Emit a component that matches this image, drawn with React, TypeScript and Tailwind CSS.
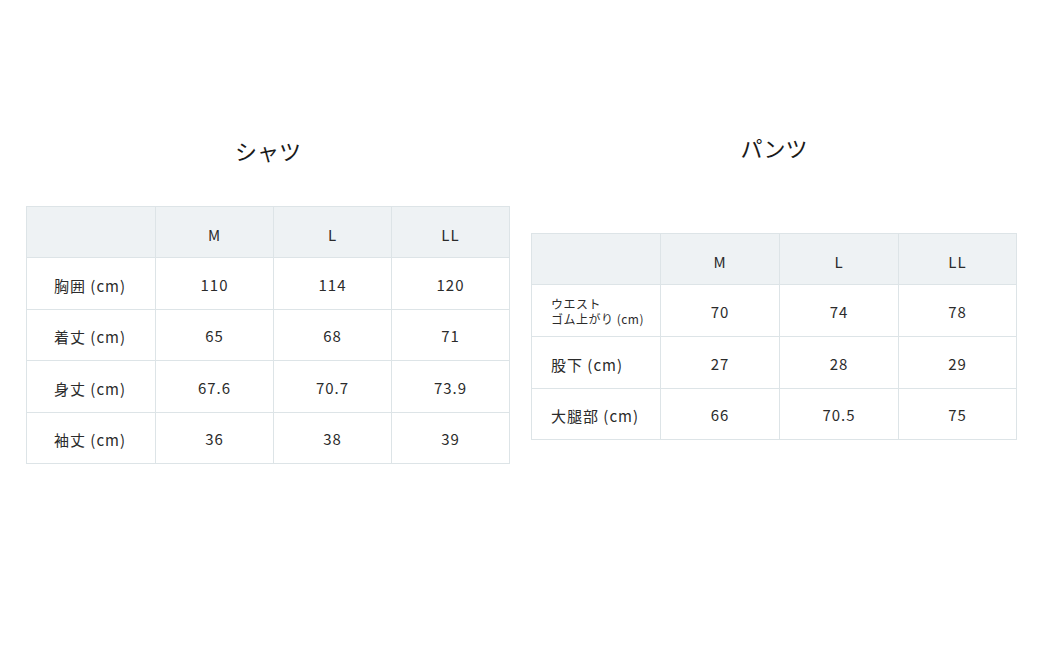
const font = { fontFamily: '"Noto Sans CJK JP", "Noto Sans", sans-serif' }

type Row = { label: React.ReactNode; values: string[]; h: string }

function SizeTable({ cols, rows, headH, labelPad }: { cols: string; rows: Row[]; headH: string; labelPad: string }) {
  const sizes = ['M', 'L', 'LL']
  return (
    <div className={`grid border-l border-t border-[#dde4e7] ${cols}`}>
      {/* header */}
      <div className={`${headH} bg-[#eef2f4] border-r border-b border-[#dde4e7]`} />
      {sizes.map((s) => (
        <div key={s} className={`${headH} bg-[#eef2f4] border-r border-b border-[#dde4e7] flex items-center justify-center pt-[6px] text-[15px] tracking-[1px] text-[#2b2b2b]`}>
          {s}
        </div>
      ))}
      {rows.map((r, i) => (
        <div key={i} className="contents">
          <div className={`${r.h} border-r border-b border-[#dde4e7] flex items-center ${labelPad} pt-[5px] text-[15px] tracking-[1px] text-[#2b2b2b]`}>
            {r.label}
          </div>
          {r.values.map((v, j) => (
            <div key={j} className={`${r.h} border-r border-b border-[#dde4e7] flex items-center justify-center pt-[3px] text-[15px] tracking-[1px] text-[#2b2b2b]`}>
              {v}
            </div>
          ))}
        </div>
      ))}
    </div>
  )
}

export default function App() {
  const shirt: Row[] = [
    { label: '胸囲 (cm)', values: ['110', '114', '120'], h: 'h-[52px]' },
    { label: '着丈 (cm)', values: ['65', '68', '71'], h: 'h-[51px]' },
    { label: '身丈 (cm)', values: ['67.6', '70.7', '73.9'], h: 'h-[52px]' },
    { label: '袖丈 (cm)', values: ['36', '38', '39'], h: 'h-[51px]' },
  ]
  const pants: Row[] = [
    {
      label: (
        <div className="text-[12px] leading-[15px] tracking-[0.5px] -mt-[4px]">
          <div>ウエスト</div>
          <div>ゴム上がり (cm)</div>
        </div>
      ),
      values: ['70', '74', '78'],
      h: 'h-[52px]',
    },
    { label: '股下 (cm)', values: ['27', '28', '29'], h: 'h-[52px]' },
    { label: '大腿部 (cm)', values: ['66', '70.5', '75'], h: 'h-[51px]' },
  ]

  return (
    <div className="w-[1040px] h-[646px] bg-white flex items-start" style={font}>
      <div className="ml-[26px] w-[484px] mt-[130px] flex flex-col">
        <div className="h-[40px] flex items-center justify-center text-[22px] text-[#1a1a1a]">シャツ</div>
        <div className="mt-[36px]">
          <SizeTable cols="grid-cols-[129px_118px_118px_118px]" rows={shirt} headH="h-[51px]" labelPad="pl-[27px]" />
        </div>
      </div>
      <div className="ml-[21px] w-[486px] mt-[127px] flex flex-col">
        <div className="h-[40px] flex items-center justify-center text-[22px] text-[#1a1a1a]">パンツ</div>
        <div className="mt-[66px]">
          <SizeTable cols="grid-cols-[129px_119px_119px_118px]" rows={pants} headH="h-[51px]" labelPad="pl-[19px]" />
        </div>
      </div>
    </div>
  )
}
